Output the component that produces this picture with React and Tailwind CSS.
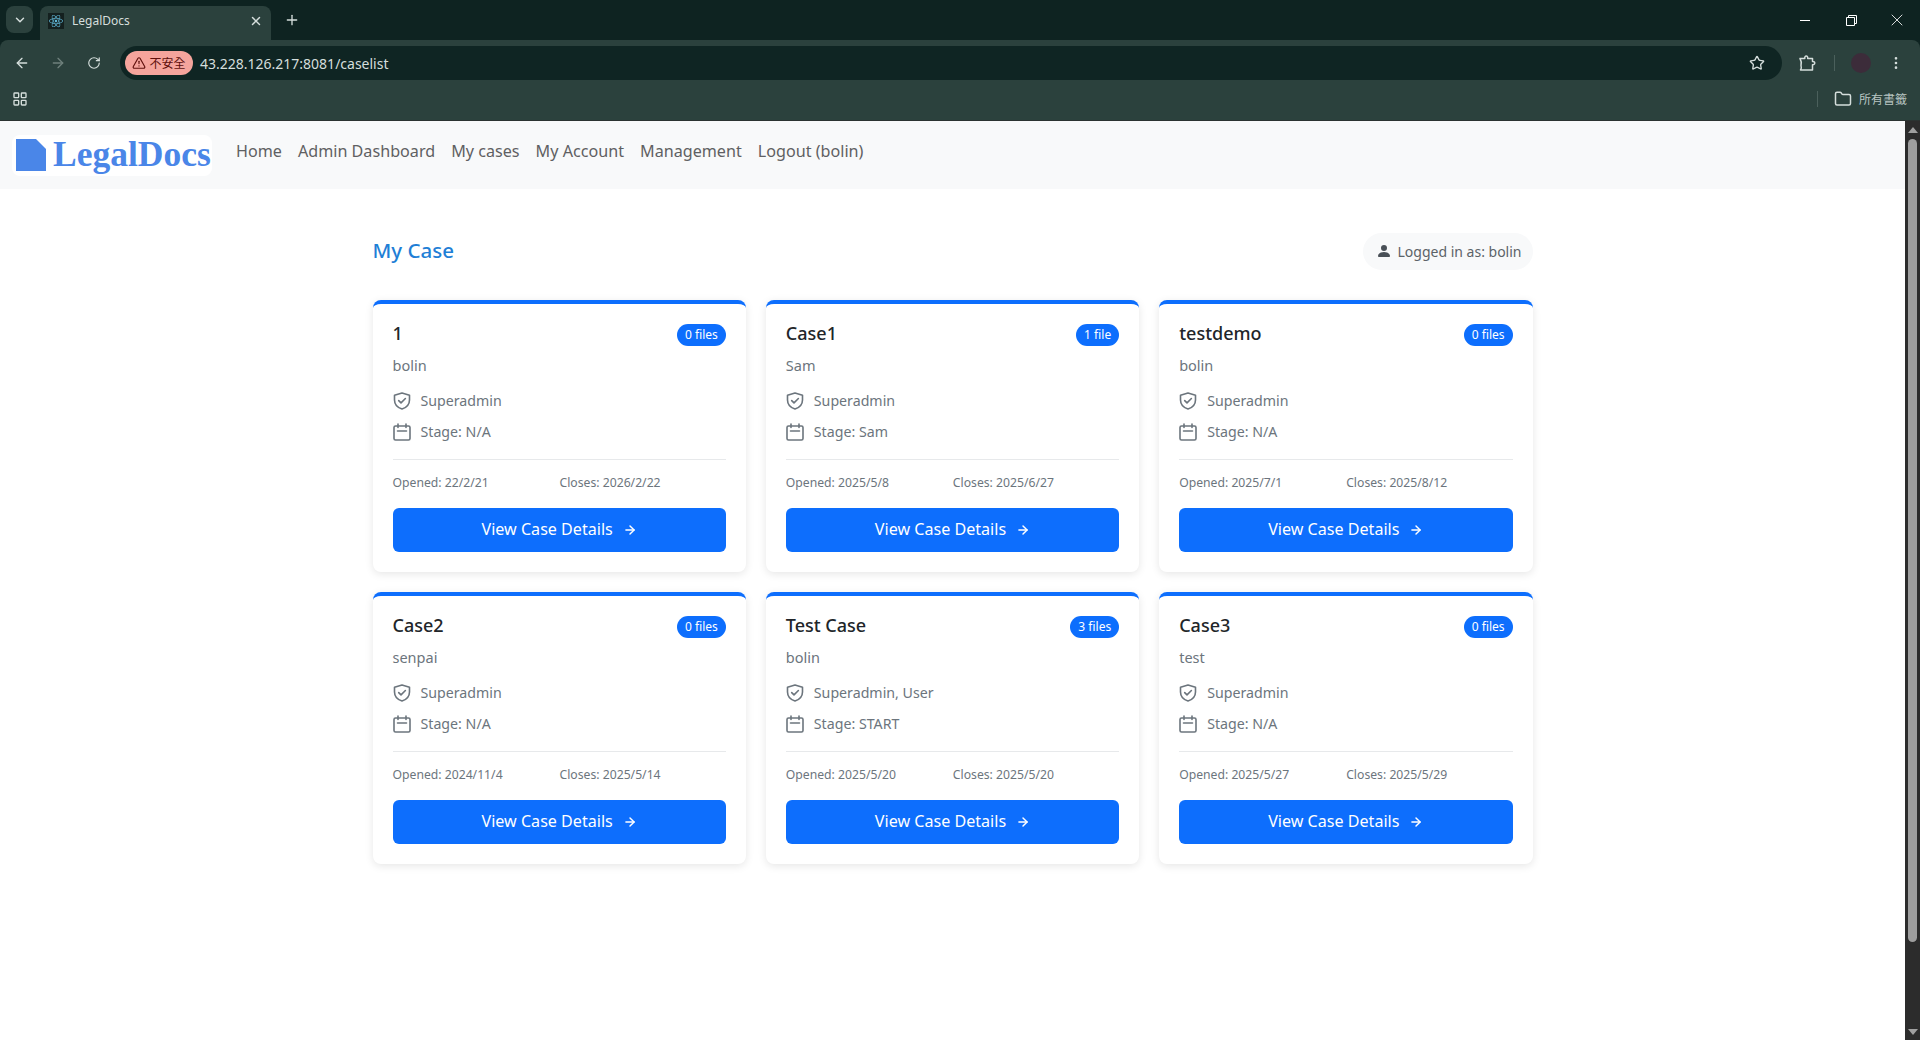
import { ArrowLeft, ArrowRight, ChevronDown, EllipsisVertical, Folder, LayoutGrid, Plus, RotateCw, Star, TriangleAlert, X } from 'lucide-react'
import { FaReact } from 'react-icons/fa'

const cases = [
  { title: '1', files: '0 files', owner: 'bolin', role: 'Superadmin', stage: 'N/A', opened: '22/2/21', closes: '2026/2/22' },
  { title: 'Case1', files: '1 file', owner: 'Sam', role: 'Superadmin', stage: 'Sam', opened: '2025/5/8', closes: '2025/6/27' },
  { title: 'testdemo', files: '0 files', owner: 'bolin', role: 'Superadmin', stage: 'N/A', opened: '2025/7/1', closes: '2025/8/12' },
  { title: 'Case2', files: '0 files', owner: 'senpai', role: 'Superadmin', stage: 'N/A', opened: '2024/11/4', closes: '2025/5/14' },
  { title: 'Test Case', files: '3 files', owner: 'bolin', role: 'Superadmin, User', stage: 'START', opened: '2025/5/20', closes: '2025/5/20' },
  { title: 'Case3', files: '0 files', owner: 'test', role: 'Superadmin', stage: 'N/A', opened: '2025/5/27', closes: '2025/5/29' },
]

const navLinks = ['Home', 'Admin Dashboard', 'My cases', 'My Account', 'Management', 'Logout (bolin)']

function ShieldIcon() {
  return (
    <svg width="18" height="18" viewBox="0 0 18 18" fill="none" stroke="currentColor" strokeWidth="1.6" strokeLinecap="round" strokeLinejoin="round" className="shrink-0">
      <path d="M9 1 L16.5 3.3 V8 C16.5 12.5 13 15.7 9 17 C5 15.7 1.5 12.5 1.5 8 V3.3 Z" />
      <path d="M5.7 8.6 L8 10.9 L12.4 6.5" />
    </svg>
  )
}

function CalendarIcon() {
  return (
    <svg width="18" height="18" viewBox="0 0 18 18" fill="none" stroke="currentColor" strokeWidth="1.6" strokeLinecap="round" strokeLinejoin="round" className="shrink-0">
      <rect x="1" y="3" width="16" height="14" rx="1.5" />
      <path d="M5 1v3.5 M13 1v3.5 M4.5 8h9" />
    </svg>
  )
}

function PuzzleIcon() {
  return (
    <svg width="18" height="18" viewBox="0 0 18 18" fill="none" stroke="currentColor" strokeWidth="1.5" strokeLinejoin="round" className="ml-[16px] shrink-0">
      <path d="M2 4.5 H6.8 C6.3 1.2 10.2 1.2 9.7 4.5 H14.5 V7.5 C17.5 7.2 17.5 11 14.5 10.7 V16 H2.5 C3.5 14.5 3.5 13 3 11.5 C3.6 9 3.2 6.5 2 4.5 Z" />
    </svg>
  )
}

function BrowserChrome() {
  return (
    <div className="bg-[#0e2321] text-[#d5dedc]">
      {/* tab strip */}
      <div className="h-[40px] flex items-start pt-[6px] pl-[6px]">
        <div className="w-[27px] h-[27px] rounded-lg bg-[#2b413d] flex items-center justify-center">
          <ChevronDown size={14} strokeWidth={2.5} />
        </div>
        <div className="ml-[7px] w-[231px] h-[34px] rounded-t-lg bg-[#2b413d] flex items-center pl-[8px] pr-[8px] pb-[4px]">
          <div className="w-4 h-4 bg-[#14201f] flex items-center justify-center">
            <FaReact size={14} className="text-[#61b8d8]" />
          </div>
          <span className="ml-2 text-[12px] flex-1">LegalDocs</span>
          <X size={14} strokeWidth={2.5} />
        </div>
        <Plus size={16} strokeWidth={2} className="ml-[13px] mt-[6px]" />
        <div className="ml-auto flex items-center mt-[4px] pr-[13px] text-white">
          <div className="w-[10px] h-px bg-white" />
          <svg width="11" height="11" viewBox="0 0 11 11" fill="none" stroke="currentColor" className="ml-[36px]">
            <path d="M0.5 2.5h8v8h-8z M2.5 2.5v-2h8v8h-2" />
          </svg>
          <X size={20} strokeWidth={1} className="ml-[30px]" />
        </div>
      </div>
      {/* toolbar */}
      <div className="h-[46px] bg-[#2b413d] rounded-tl-lg rounded-tr-lg flex items-center pl-[14px]">
        <ArrowLeft size={16} />
        <ArrowRight size={16} className="ml-[20px] text-[#6f807c]" />
        <RotateCw size={14} className="ml-[21px]" />
        <div className="ml-[19px] w-[1662px] h-[34px] rounded-full bg-[#0f2523] flex items-center pl-[5px] pr-[17px]">
          <div className="w-[68px] h-[24px] rounded-full bg-[#f5a49c] text-[#60100c] flex items-center justify-center gap-[3px] text-[12px] font-['Noto_Sans_CJK_TC',sans-serif]">
            <TriangleAlert size={14} />
            不安全
          </div>
          <span className="ml-[7px] text-[14px]">43.228.126.217:8081/caselist</span>
          <Star size={16} className="ml-auto" />
        </div>
        <PuzzleIcon />
        <div className="ml-[18px] w-px h-[16px] bg-[#4b605c]" />
        <div className="ml-[16px] w-[20px] h-[20px] rounded-full bg-[#3c2c3a]" />
        <EllipsisVertical size={16} className="ml-[17px]" />
      </div>
      {/* bookmarks */}
      <div className="h-[35px] pb-[8px] bg-[#2b413d] flex items-center pl-[12px] pr-[13px] border-b border-[#2b3331]">
        <LayoutGrid size={16} />
        <div className="ml-auto w-px h-[16px] bg-[#4b605c]" />
        <Folder size={18} className="ml-[16px]" />
        <span className="ml-[7px] text-[12px] text-[#b9c6c3] font-['Noto_Sans_CJK_TC',sans-serif]">所有書籤</span>
      </div>
    </div>
  )
}

function Navbar() {
  return (
    <nav className="h-[68px] bg-[#f8f9fa] flex items-center pl-[12px]">
      <div className="w-[200px] h-[41px] bg-white rounded-lg flex items-center pl-[4px]">
        <svg width="30" height="32" viewBox="0 0 30 32">
          <path d="M0 0h20l10 10v22H0z" fill="#4a86e8" />
        </svg>
        <span className="ml-[7px] text-[35.5px] leading-none font-bold text-[#4a86e8] font-['Liberation_Serif',serif]">LegalDocs</span>
      </div>
      <div className="ml-[24px] pb-[8px] flex gap-[16px] text-[16.15px] text-[#5f6062]">
        {navLinks.map((link) => (
          <a key={link}>{link}</a>
        ))}
      </div>
    </nav>
  )
}

function CaseCard({ item }) {
  return (
    <div className="h-[272px] bg-white rounded-lg border-t-4 border-[#0d6efd] px-5 pt-5 shadow-[0_2px_8px_rgba(0,0,0,0.1)]">
      <div className="h-[22px] flex items-center justify-between">
        <span className="text-[18px] font-medium text-[#212529] pb-[3px]">{item.title}</span>
        <span className="h-[22px] px-2 rounded-full bg-[#0d6efd] text-white text-[12px] flex items-center">{item.files}</span>
      </div>
      <div className="mt-[7px] text-[14.5px] leading-6 text-[#6c757d]">{item.owner}</div>
      <div className="mt-3 h-6 flex items-center text-[14.2px] text-[#6c757d]">
        <ShieldIcon />
        <span className="ml-[10px]">{item.role}</span>
      </div>
      <div className="mt-[7px] h-6 flex items-center text-[14.2px] text-[#6c757d]">
        <CalendarIcon />
        <span className="ml-[10px]">Stage: {item.stage}</span>
      </div>
      <div className="mt-[15px] border-t border-[#e7e9eb]" />
      <div className="mt-[13px] h-5 flex items-center text-[12.2px] text-[#6c757d]">
        <span className="w-[167px]">Opened: {item.opened}</span>
        <span>Closes: {item.closes}</span>
      </div>
      <button className="mt-[15px] w-full h-[44px] rounded-md bg-[#0d6efd] text-white text-[16.1px] flex items-center justify-center gap-[10px] pb-[1px]">
        View Case Details
        <ArrowRight size={14} strokeWidth={2.5} />
      </button>
    </div>
  )
}

function Scrollbar() {
  return (
    <div className="w-[15px] shrink-0 bg-[#2c2c2c] flex flex-col items-center pt-[6px] pb-[5px]">
      <div className="w-0 h-0 border-x-[5px] border-x-transparent border-b-[6px] border-b-[#a0a0a0]" />
      <div className="mt-[6px] w-[9px] h-[803px] rounded-full bg-[#9e9e9e]" />
      <div className="mt-auto w-0 h-0 border-x-[5px] border-x-transparent border-t-[6px] border-t-[#a0a0a0]" />
    </div>
  )
}

export default function App() {
  return (
    <div className="h-[1040px] flex flex-col overflow-hidden bg-white font-['Noto_Sans',sans-serif]">
      <BrowserChrome />
      <div className="flex-1 flex min-h-0">
        <div className="flex-1 min-w-0">
          <Navbar />
          <main className="w-[1160px] mx-auto">
            <div className="mt-[44px] h-[37px] flex items-center justify-between">
              <h1 className="text-[20.5px] font-medium text-[#1f7fd6] pb-[3px]">My Case</h1>
              <div className="h-[37px] w-[170px] rounded-full bg-[#f8f9fa] flex items-center pl-[13px] pb-[1px] text-[14px] text-[#5c6368]">
                <svg width="16" height="16" viewBox="0 0 16 16" fill="#495057">
                  <path d="M3 14s-1 0-1-1 1-4 6-4 6 3 6 4-1 1-1 1H3Zm5-6a3 3 0 1 0 0-6 3 3 0 0 0 0 6Z" />
                </svg>
                <span className="ml-[6px]">Logged in as: bolin</span>
              </div>
            </div>
            <div className="mt-[30px] grid grid-cols-3 gap-5">
              {cases.map((item) => (
                <CaseCard key={item.title} item={item} />
              ))}
            </div>
          </main>
        </div>
        <Scrollbar />
      </div>
    </div>
  )
}
